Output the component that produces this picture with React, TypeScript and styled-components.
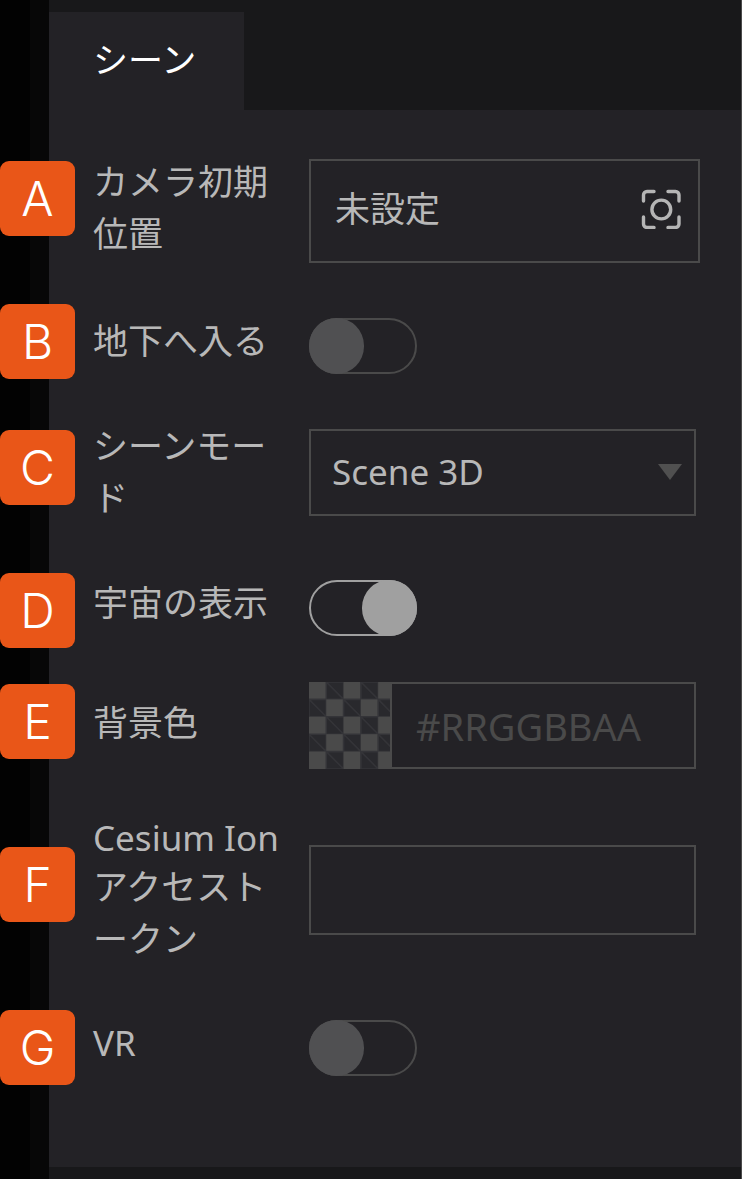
import React from "react";
import styled, { createGlobalStyle } from "styled-components";

const GlobalStyle = createGlobalStyle`
  * { box-sizing: border-box; }
  body { margin: 0; background: #000; }
  button, input, select { font: inherit; color: inherit; margin: 0; }
`;

const line = "#4a4a4a";

const Page = styled.div`
  display: flex;
  min-height: 100vh;
  background: #020202;
  color: #b8b8b8;
  font: 400 35px/52px "Noto Sans", "Noto Sans CJK JP", sans-serif;
`;

const Gutter = styled.div`
  flex: none;
  width: 49px;
  border-right: 19px solid #070707;
`;

const Side = styled.main`
  flex: 1;
  min-width: 0;
  display: flex;
  flex-direction: column;
  background: #18181a;
  border-right: 1px solid #4a4a4a;
`;

const TabBar = styled.nav`
  display: flex;
  padding-top: 12px;
`;

const Tab = styled.button`
  height: 98px;
  padding: 0 48px 2px 44px;
  border: 0;
  background: #232226;
  color: #fff;
`;

const Panel = styled.form`
  padding: 49px 41px 91px 44px;
  background: #232226;
`;

const Row = styled.div<{ $gap: number }>`
  position: relative;
  display: grid;
  grid-template-columns: 216px minmax(0, 1fr);
  align-items: center;
  margin-bottom: ${(p) => p.$gap}px;
`;

const Badge = styled.span<{ $top: number }>`
  position: absolute;
  left: -93px;
  top: ${(p) => p.$top}px;
  width: 75px;
  height: 75px;
  border-radius: 9px;
  background: #e95618;
  color: #fff;
  font: 350 48px/76px Inter, sans-serif;
  text-align: center;
`;

const Label = styled.label<{ $lift: number }>`
  white-space: nowrap;
  margin-top: -${(p) => p.$lift}px;
`;

const TextLine = styled.span<{ $latin?: boolean }>`
  display: block;
  line-height: ${(p) => (p.$latin ? 46 : 52)}px;
`;

const CameraField = styled.div`
  display: flex;
  align-items: center;
  justify-content: space-between;
  height: 104px;
  padding: 0 17px 4px 24px;
  border: 2px solid ${line};
`;

const IconButton = styled.button`
  display: flex;
  padding: 0;
  border: 0;
  background: none;
`;

const Switch = styled.input`
  appearance: none;
  display: block;
  width: 108px;
  height: 56px;
  border: 2px solid ${line};
  border-radius: 28px;
  &::before {
    content: "";
    display: block;
    width: 55px;
    height: 56px;
    margin: -2px;
    border-radius: 28px;
    background: #505052;
  }
  &:checked { border-color: #a0a0a0; }
  &:checked::before { margin-left: 51px; background: #a0a0a0; }
`;

const Field = styled.div`
  position: relative;
  display: flex;
  margin-right: 4px;
`;

const Select = styled.select`
  appearance: none;
  width: 100%;
  height: 87px;
  padding: 0 56px 0 21px;
  border: 2px solid ${line};
  border-radius: 0;
  background: transparent;
`;

const Caret = styled.svg`
  position: absolute;
  right: 14px;
  top: 35px;
  pointer-events: none;
`;

const TextBox = styled.input<{ $height: number }>`
  flex: 1;
  min-width: 0;
  height: ${(p) => p.$height}px;
  padding: 0 24px;
  border: 2px solid ${line};
  border-radius: 0;
  background: transparent;
  font-size: 38px;
  &::placeholder { color: ${line}; opacity: 1; }
`;

const Swatch = styled.svg`
  flex: none;
  margin-right: -1px;
`;

const cells = Array.from({ length: 25 }, (_, i) => ({ x: i % 5, y: Math.floor(i / 5) }));

function Checker() {
  return (
    <Swatch width="82" height="87" viewBox="0 0 82 87" aria-hidden="true">
      <rect width="82" height="87" fill="#29292d" />
      {cells.map(({ x, y }) =>
        (x + y) % 2 === 0 ? (
          <rect key={`${x}${y}`} x={x * 17.3} y={y * 17.4} width="17.3" height="17.4" fill="#4a4a4a" />
        ) : (
          <path
            key={`${x}${y}`}
            d={`M${x * 17.3} ${y * 17.4}h17.3v17.4h-17.3zl17.3 17.4`}
            fill="none"
            stroke="#343438"
            strokeWidth="1.6"
          />
        )
      )}
    </Swatch>
  );
}

function CaptureIcon() {
  return (
    <svg width="40" height="40" viewBox="0 0 40 40" fill="none" stroke="#b5b5b5" strokeWidth="3.4" strokeLinecap="round" aria-hidden="true">
      <path d="M2.500 12V6a3.500 3.500 0 0 1 3.500-3.500H13M27 2.500h7.500A3.500 3.500 0 0 1 38 6v6M38 28v7a3.500 3.500 0 0 1-3.500 3.500H27M13 38.500H6A3.500 3.500 0 0 1 2.500 35v-7" />
      <circle cx="20.300" cy="20.500" r="9.400" />
    </svg>
  );
}

export default function App() {
  return (
    <Page>
      <GlobalStyle />
      <Gutter />
      <Side>
        <TabBar>
          <Tab type="button">シーン</Tab>
        </TabBar>
        <Panel>
          <Row $gap={55}>
            <Badge $top={2}>A</Badge>
            <Label htmlFor="camera" $lift={6}>
              <TextLine>カメラ初期</TextLine>
              <TextLine>位置</TextLine>
            </Label>
            <CameraField>
              <span>未設定</span>
              <IconButton id="camera" type="button"><CaptureIcon /></IconButton>
            </CameraField>
          </Row>
          <Row $gap={46}>
            <Badge $top={-14}>B</Badge>
            <Label htmlFor="underground" $lift={10}>地下へ入る</Label>
            <Switch id="underground" type="checkbox" />
          </Row>
          <Row $gap={56}>
            <Badge $top={10}>C</Badge>
            <Label htmlFor="mode" $lift={0}>
              <TextLine>シーンモー</TextLine>
              <TextLine>ド</TextLine>
            </Label>
            <Field>
              <Select id="mode" defaultValue="3d">
                <option value="3d">Scene 3D</option>
                <option value="2d">Scene 2D</option>
              </Select>
              <Caret width="24" height="16" viewBox="0 0 24 16" aria-hidden="true">
                <path d="M0 0H24L12 16Z" fill="#505050" />
              </Caret>
            </Field>
          </Row>
          <Row $gap={46}>
            <Badge $top={-7}>D</Badge>
            <Label htmlFor="space" $lift={10}>宇宙の表示</Label>
            <Switch id="space" type="checkbox" defaultChecked />
          </Row>
          <Row $gap={46}>
            <Badge $top={2}>E</Badge>
            <Label htmlFor="background" $lift={6}>背景色</Label>
            <Field>
              <Checker />
              <TextBox id="background" type="text" placeholder="#RRGGBBAA" $height={87} />
            </Field>
          </Row>
          <Row $gap={55}>
            <Badge $top={32}>F</Badge>
            <Label htmlFor="token" $lift={0}>
              <TextLine $latin>Cesium Ion</TextLine>
              <TextLine>アクセスト</TextLine>
              <TextLine>ークン</TextLine>
            </Label>
            <Field>
              <TextBox id="token" type="text" $height={90} />
            </Field>
          </Row>
          <Row $gap={0}>
            <Badge $top={-10}>G</Badge>
            <Label htmlFor="vr" $lift={10}>VR</Label>
            <Switch id="vr" type="checkbox" />
          </Row>
        </Panel>
      </Side>
    </Page>
  );
}
